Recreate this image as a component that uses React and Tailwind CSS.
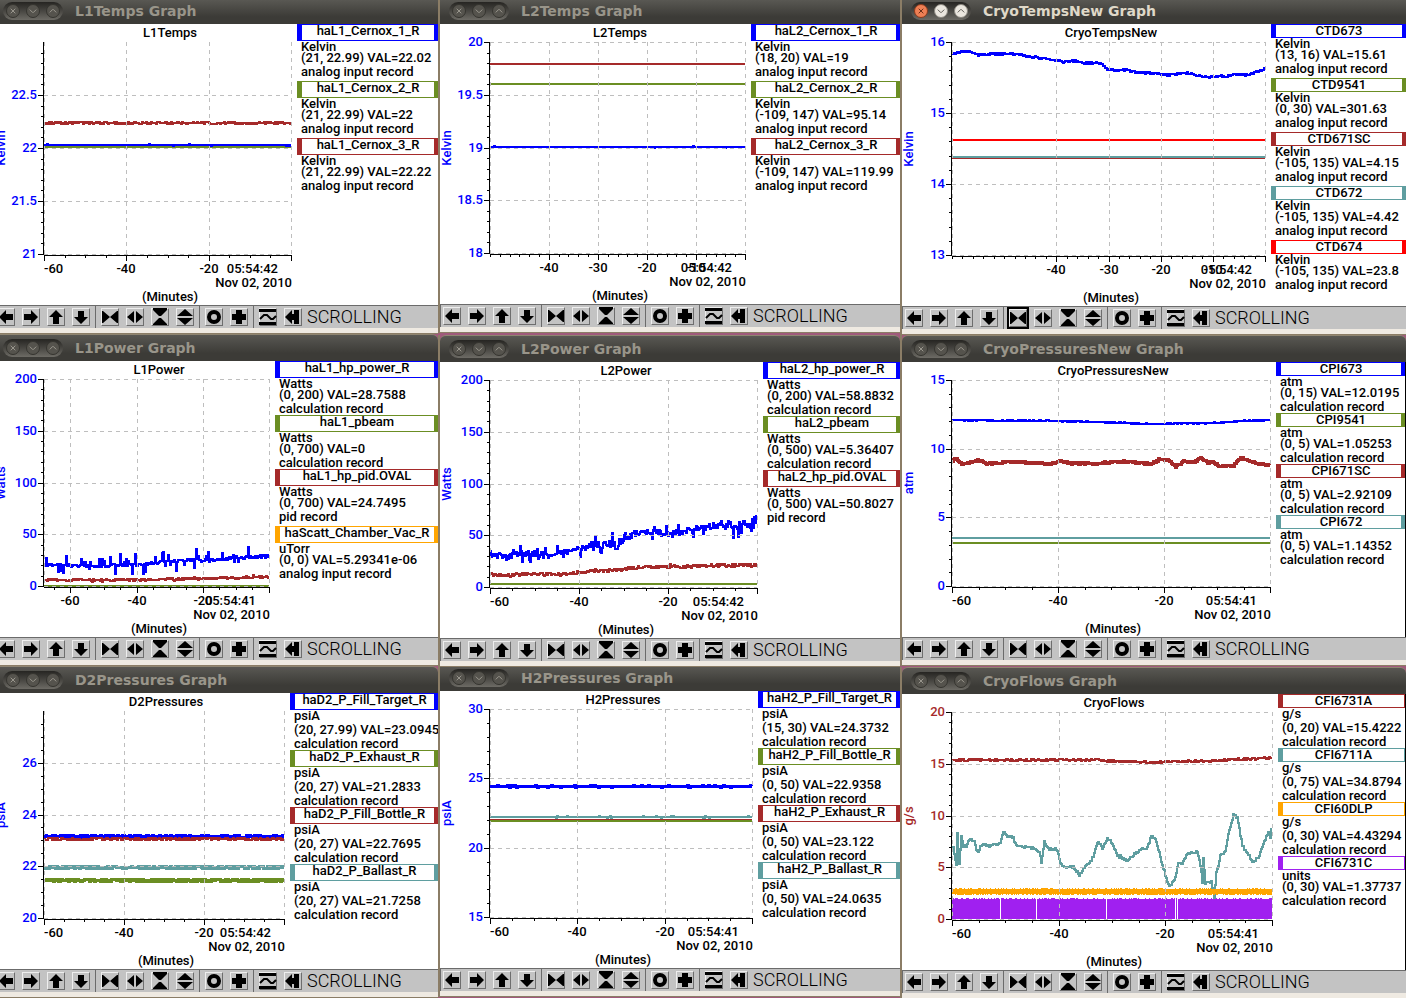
import clsx from "clsx";

const BLUE = "#0000ff";
const GREEN = "#6b8e23";
const BROWN = "#a52a2a";
const TEAL = "#5f9ea0";
const ORANGE = "#ffa500";
const PURPLE = "#a020f0";
const RED = "#ff0000";

const PLOT_LEFT = 50;
const PLOT_TOP = 18;
const PLOT_RIGHT_GAP = 6;
const PLOT_BOTTOM_GAP = 51;

const columns = [
  {
    className: "-ml-2",
    windows: [
      {
        name: "L1Temps",
        flush: true,
        size: [303, 281],
        legendWidth: "w-[141px]",
        y: { label: "Kelvin", min: 21, max: 23, ticks: [21, 21.5, 22, 22.5], minor: 0.1 },
        x: { span: 60, ticks: [-60, -40, -20], minor: 5, time: "05:54:42" },
        series: [
          { color: BROWN, level: 99, noise: 2 },
          { color: GREEN, level: 123, noise: 0 },
          { color: BLUE, level: 121, noise: 0, spike: 2, rate: 0.06 },
        ],
        legend: [
          [BLUE, "haL1_Cernox_1_R", "Kelvin", "(21, 22.99) VAL=22.02", "analog input record"],
          [GREEN, "haL1_Cernox_2_R", "Kelvin", "(21, 22.99) VAL=22", "analog input record"],
          [BROWN, "haL1_Cernox_3_R", "Kelvin", "(21, 22.99) VAL=22.22", "analog input record"],
        ],
      },
      {
        name: "L1Power",
        size: [281, 276],
        legendWidth: "w-[163px]",
        y: { label: "Watts", min: 0, max: 200, ticks: [0, 50, 100, 150, 200], minor: 10 },
        x: { span: 68, ticks: [-60, -40, -20], minor: 5, time: "05:54:41" },
        series: [
          { color: GREEN, level: 225, noise: 0 },
          {
            color: BROWN,
            points: [[50, 219], [143, 219], [189, 218], [274, 216]],
            noise: 2,
            spike: 3,
            rate: 0.1,
          },
          {
            color: BLUE,
            points: [[50, 204], [106, 205], [143, 204], [163, 202], [189, 199], [223, 199], [239, 197], [274, 195]],
            noise: 3,
            spike: 24,
            rate: 0.24,
          },
        ],
        legend: [
          [BLUE, "haL1_hp_power_R", "Watts", "(0, 200) VAL=28.7588", "calculation record"],
          [GREEN, "haL1_pbeam", "Watts", "(0, 700) VAL=0", "calculation record"],
          [BROWN, "haL1_hp_pid.OVAL", "Watts", "(0, 700) VAL=24.7495", "pid record"],
          [ORANGE, "haScatt_Chamber_Vac_R", "uTorr", "(0, 0) VAL=5.29341e-06", "analog input record"],
        ],
      },
      {
        name: "D2Pressures",
        size: [296, 276],
        legendWidth: "w-[148px]",
        y: { label: "psiA", min: 20, max: 28, ticks: [20, 22, 24, 26], minor: 0.5 },
        x: { span: 60, ticks: [-60, -40, -20], minor: 5, time: "05:54:42" },
        series: [
          { color: BLUE, level: 143, noise: 2, width: 3 },
          { color: BROWN, level: 146, noise: 3, width: 2 },
          { color: TEAL, level: 174, noise: 3, width: 3 },
          { color: GREEN, level: 187, noise: 3, width: 3 },
        ],
        legend: [
          [BLUE, "haD2_P_Fill_Target_R", "psiA", "(20, 27.99) VAL=23.0945", "calculation record"],
          [GREEN, "haD2_P_Exhaust_R", "psiA", "(20, 27) VAL=21.2833", "calculation record"],
          [BROWN, "haD2_P_Fill_Bottle_R", "psiA", "(20, 27) VAL=22.7695", "calculation record"],
          [TEAL, "haD2_P_Ballast_R", "psiA", "(20, 27) VAL=21.7258", "calculation record"],
        ],
      },
    ],
  },
  {
    windows: [
      {
        name: "L2Temps",
        flush: true,
        size: [311, 280],
        legendWidth: "w-[149px]",
        y: { label: "Kelvin", min: 18, max: 20, ticks: [18, 18.5, 19, 19.5, 20], minor: 0.1 },
        x: { span: 52, ticks: [-40, -30, -20, -10], minor: 2, time: "05:54:42" },
        series: [
          { color: BROWN, level: 40, noise: 0 },
          { color: GREEN, level: 60, noise: 0 },
          { color: BLUE, level: 123, noise: 0, spike: 2, rate: 0.06 },
        ],
        legend: [
          [BLUE, "haL2_Cernox_1_R", "Kelvin", "(18, 20) VAL=19", "analog input record"],
          [GREEN, "haL2_Cernox_2_R", "Kelvin", "(-109, 147) VAL=95.14", "analog input record"],
          [BROWN, "haL2_Cernox_3_R", "Kelvin", "(-109, 147) VAL=119.99", "analog input record"],
        ],
      },
      {
        name: "L2Power",
        className: "mt-[2px]",
        size: [323, 276],
        legendWidth: "w-[137px]",
        y: { label: "Watts", min: 0, max: 200, ticks: [0, 50, 100, 150, 200], minor: 10 },
        x: { span: 60, ticks: [-60, -40, -20], minor: 5, time: "05:54:42" },
        series: [
          { color: GREEN, level: 222, noise: 0 },
          {
            color: BROWN,
            points: [[50, 212], [65, 214], [85, 212], [125, 212], [151, 209], [178, 208], [200, 205], [231, 205], [260, 204], [316, 203]],
            noise: 3,
            spike: 4,
            rate: 0.1,
          },
          {
            color: BLUE,
            points: [
              [50, 192], [65, 195], [85, 191], [108, 193], [131, 189], [151, 183], [178, 181], [195, 171],
              [215, 170], [231, 172], [248, 167], [275, 164], [291, 166], [308, 163], [316, 165],
            ],
            noise: 6,
            spike: 20,
            rate: 0.28,
          },
        ],
        legend: [
          [BLUE, "haL2_hp_power_R", "Watts", "(0, 200) VAL=58.8832", "calculation record"],
          [GREEN, "haL2_pbeam", "Watts", "(0, 500) VAL=5.36407", "calculation record"],
          [BROWN, "haL2_hp_pid.OVAL", "Watts", "(0, 500) VAL=50.8027", "pid record"],
        ],
      },
      {
        name: "H2Pressures",
        flush: true,
        size: [318, 277],
        legendWidth: "w-[142px]",
        y: { label: "psiA", min: 15, max: 30, ticks: [15, 20, 25, 30], minor: 1 },
        x: { span: 60, ticks: [-60, -40, -20], minor: 5, time: "05:54:41" },
        series: [
          { color: BLUE, level: 95, noise: 1, spike: 2, rate: 0.2, width: 3 },
          { color: TEAL, level: 126, noise: 1, spike: 2, rate: 0.1 },
          { color: GREEN, level: 130, noise: 0 },
          { color: BROWN, level: 128, noise: 0, width: 1 },
        ],
        legend: [
          [BLUE, "haH2_P_Fill_Target_R", "psiA", "(15, 30) VAL=24.3732", "calculation record"],
          [GREEN, "haH2_P_Fill_Bottle_R", "psiA", "(0, 50) VAL=22.9358", "calculation record"],
          [BROWN, "haH2_P_Exhaust_R", "psiA", "(0, 50) VAL=23.122", "calculation record"],
          [TEAL, "haH2_P_Ballast_R", "psiA", "(0, 50) VAL=24.0635", "calculation record"],
        ],
      },
    ],
  },
  {
    windows: [
      {
        name: "CryoTempsNew",
        flush: true,
        active: true,
        size: [369, 282],
        legendWidth: "w-[135px]",
        y: { label: "Kelvin", min: 13, max: 16, ticks: [13, 14, 15, 16], minor: 0.2 },
        x: { span: 60, ticks: [-40, -30, -20, -10], minor: 2, time: "05:54:42" },
        series: [
          { color: RED, level: 116, noise: 0 },
          { color: BROWN, level: 134, noise: 0 },
          { color: TEAL, level: 133, noise: 0 },
          {
            color: BLUE,
            points: [
              [50, 30], [65, 27], [76, 31], [91, 30], [111, 30], [131, 33], [153, 36], [161, 38], [173, 37],
              [181, 39], [198, 39], [205, 45], [215, 47], [225, 46], [238, 49], [251, 49], [265, 51], [285, 49],
              [293, 51], [305, 53], [318, 52], [323, 53], [331, 50], [346, 51], [353, 48], [362, 45],
            ],
            noise: 2,
          },
        ],
        legend: [
          [BLUE, "CTD673", "Kelvin", "(13, 16) VAL=15.61", "analog input record"],
          [GREEN, "CTD9541", "Kelvin", "(0, 30) VAL=301.63", "analog input record"],
          [BROWN, "CTD671SC", "Kelvin", "(-105, 135) VAL=4.15", "analog input record"],
          [TEAL, "CTD672", "Kelvin", "(-105, 135) VAL=4.42", "analog input record"],
          [RED, "CTD674", "Kelvin", "(-105, 135) VAL=23.8", "analog input record"],
        ],
      },
      {
        name: "CryoPressuresNew",
        size: [374, 275],
        legendWidth: "w-[130px] border-r border-black",
        y: { label: "atm", min: 0, max: 15, ticks: [0, 5, 10, 15], minor: 1 },
        x: { span: 60, ticks: [-60, -40, -20], minor: 5, time: "05:54:41" },
        series: [
          {
            color: BLUE,
            points: [[50, 58], [155, 59], [200, 60], [250, 62], [310, 61], [340, 59], [368, 58]],
            noise: 1,
          },
          {
            color: BROWN,
            points: [
              [50, 99], [53, 96], [60, 102], [75, 98], [85, 101], [115, 99], [128, 101], [138, 100], [146, 102],
              [158, 98], [168, 101], [195, 101], [215, 99], [238, 100], [248, 102], [256, 97], [265, 97],
              [273, 104], [281, 99], [293, 99], [298, 95], [306, 101], [310, 99], [316, 104], [331, 103],
              [338, 95], [348, 99], [358, 102], [368, 103],
            ],
            noise: 2,
            width: 3,
          },
          { color: TEAL, level: 176, noise: 0 },
          { color: GREEN, level: 181, noise: 1 },
        ],
        legend: [
          [BLUE, "CPI673", "atm", "(0, 15) VAL=12.0195", "calculation record"],
          [GREEN, "CPI9541", "atm", "(0, 5) VAL=1.05253", "calculation record"],
          [BROWN, "CPI671SC", "atm", "(0, 5) VAL=2.92109", "calculation record"],
          [TEAL, "CPI672", "atm", "(0, 5) VAL=1.14352", "calculation record"],
        ],
      },
      {
        name: "CryoFlows",
        className: "mt-px",
        size: [376, 276],
        legendWidth: "w-[128px] border-r border-black",
        thinEdge: true,
        y: { label: "g/s", color: BROWN, min: 0, max: 20, ticks: [0, 5, 10, 15, 20], minor: 1 },
        x: { span: 60, ticks: [-60, -40, -20], minor: 5, time: "05:54:41" },
        series: [
          {
            color: BROWN,
            points: [[50, 66], [190, 66], [240, 68], [310, 67], [340, 65], [369, 64]],
            noise: 2,
          },
          {
            color: TEAL,
            points: [
              [51, 154], [54, 171], [55, 138], [57, 170], [59, 141], [61, 153], [65, 151], [68, 144], [72, 148],
              [75, 158], [80, 151], [88, 152], [98, 149], [100, 141], [102, 138], [105, 142], [111, 144],
              [115, 153], [131, 154], [137, 158], [139, 168], [141, 154], [142, 148], [145, 154], [155, 156],
              [158, 168], [161, 173], [171, 173], [177, 181], [181, 174], [188, 168], [192, 159], [195, 148],
              [200, 154], [205, 145], [210, 149], [215, 161], [225, 167], [231, 161], [238, 156], [245, 153],
              [249, 142], [253, 146], [258, 163], [263, 181], [267, 193], [273, 184], [276, 168], [280, 171],
              [285, 159], [295, 158], [298, 171], [300, 188], [301, 164], [303, 189], [309, 188], [312, 204],
              [314, 178], [316, 171], [318, 161], [323, 158], [326, 141], [331, 121], [335, 124], [340, 151],
              [350, 167], [356, 164], [361, 149], [366, 138], [368, 144], [370, 126],
            ],
            noise: 3,
            width: 2,
          },
          { color: ORANGE, band: [194, 200] },
          { color: PURPLE, band: [204, 225], gaps: [98, 134, 204, 273, 275] },
        ],
        legend: [
          [BROWN, "CFI6731A", "g/s", "(0, 20) VAL=15.4222", "calculation record"],
          [TEAL, "CFI6711A", "g/s", "(0, 75) VAL=34.8794", "calculation record"],
          [ORANGE, "CFI60DLP", "g/s", "(0, 30) VAL=4.43294", "calculation record"],
          [PURPLE, "CFI6731C", "units", "(0, 30) VAL=1.37737", "calculation record"],
        ],
      },
    ],
  },
];

// small seeded generator so that the traces look the same on each render
function createRandom(seed) {
  let state = seed;
  return () => {
    state = (state * 1664525 + 1013904223) % 4294967296;
    return state / 4294967296;
  };
}

function valueAt(points, x) {
  const next = points.findIndex((point) => point[0] >= x);
  if (next === -1) return points[points.length - 1][1];
  if (next === 0) return points[0][1];
  const [x0, y0] = points[next - 1];
  const [x1, y1] = points[next];
  return y0 + ((y1 - y0) * (x - x0)) / (x1 - x0);
}

function tracePath(series, right, seed) {
  const random = createRandom(seed);
  const points = series.points || [[PLOT_LEFT, series.level]];
  let path = "";
  for (let x = PLOT_LEFT; x < right; x++) {
    let y = valueAt(points, x) + (random() - 0.5) * series.noise;
    if (series.spike && random() < series.rate) {
      y += (random() - 0.55) * series.spike;
    }
    path += x === PLOT_LEFT ? `M${x} ${Math.round(y)}` : `H${x}V${Math.round(y)}`;
  }
  return `${path}H${right}`;
}

function bandPath(series, right, seed) {
  const random = createRandom(seed);
  const [top, bottom] = series.band;
  let path = "";
  for (let x = PLOT_LEFT; x < right; x++) {
    if (series.gaps && series.gaps.includes(x)) continue;
    const y = top + Math.round(random() * 1.4);
    path += `M${x + 0.5} ${y}V${bottom + (series.gaps ? 0 : Math.round(random() * 1.4))}`;
  }
  return path;
}

function range(from, to, step) {
  const count = Math.floor((to - from) / step + 0.001);
  return Array.from({ length: count + 1 }, (_, i) => from + i * step);
}

function Chart({ name, size, x, y, series }) {
  const [width, height] = size;
  const right = width - PLOT_RIGHT_GAP;
  const bottom = height - PLOT_BOTTOM_GAP;
  const middle = Math.round((PLOT_LEFT + right) / 2) + 2;
  const labelColor = y.color || BLUE;

  const toX = (minutes) => Math.round(right + ((right - PLOT_LEFT) * minutes) / x.span);
  const toY = (value) =>
    Math.round(bottom - ((bottom - PLOT_TOP) * (value - y.min)) / (y.max - y.min));

  return (
    <svg
      viewBox={`0 0 ${width} ${height}`}
      role="img"
      aria-label={`${name} strip chart`}
      className="block h-auto w-full font-[Roboto,sans-serif] text-[13px] font-medium"
    >
      <g fill="none" shapeRendering="crispEdges">
        {series.map((item, i) => (
          <path
            key={i}
            d={item.band ? bandPath(item, right, i + 7) : tracePath(item, right, i * 31 + width)}
            stroke={item.color}
            strokeWidth={item.band ? 1 : item.width || 2}
          />
        ))}
        <g stroke="#bebebe" strokeDasharray="4 4">
          {y.ticks.map((tick) => (
            <path key={tick} d={`M${PLOT_LEFT} ${toY(tick) + 0.5}H${right}`} />
          ))}
          {[...x.ticks, 0].map((tick) => (
            <path key={tick} d={`M${toX(tick) + 0.5} ${PLOT_TOP}V${bottom}`} />
          ))}
          <path d={`M${PLOT_LEFT + 0.5} ${PLOT_TOP}V${bottom}`} />
        </g>
        <g stroke="#000">
          <path d={`M49.5 ${PLOT_TOP}V${bottom + 1}M50 ${bottom + 1.5}H${right + 1}`} />
          {y.ticks.map((tick) => (
            <path key={tick} d={`M44 ${toY(tick) + 0.5}H49`} />
          ))}
          {range(y.min, y.max - y.minor, y.minor).map((tick) => (
            <path key={tick} d={`M47 ${toY(tick) + 0.5}H49`} />
          ))}
          {[...x.ticks, 0].map((tick) => (
            <path key={tick} d={`M${toX(tick) + 0.5} ${bottom + 2}V${bottom + 7}`} />
          ))}
          {range(0, x.span, x.minor).map((tick) => (
            <path key={tick} d={`M${toX(-tick) + 0.5} ${bottom + 2}V${bottom + 4}`} />
          ))}
        </g>
      </g>

      <text x={middle} y="13" textAnchor="middle">
        {name}
      </text>
      <g fill={labelColor}>
        {y.ticks.map((tick) => (
          <text key={tick} x="43" y={toY(tick) + 4} textAnchor="end">
            {tick}
          </text>
        ))}
        <text
          transform={`translate(11 ${Math.round((PLOT_TOP + bottom) / 2)}) rotate(-90)`}
          textAnchor="middle"
        >
          {y.label}
        </text>
      </g>
      {x.ticks.map((tick) => (
        <text
          key={tick}
          x={toX(tick)}
          y={bottom + 19}
          textAnchor={toX(tick) === PLOT_LEFT ? "start" : "middle"}
        >
          {tick}
        </text>
      ))}
      <text x={right - 13} y={bottom + 19} textAnchor="end">
        {x.time}
      </text>
      <text x={right + 1} y={bottom + 33} textAnchor="end">
        Nov 02, 2010
      </text>
      <text x={middle} y={bottom + 47} textAnchor="middle">
        (Minutes)
      </text>
    </svg>
  );
}

const hasDescender = (text) => /[gjpqy_()]/.test(text);

function Legend({ items, widthClass, thinEdge }) {
  return (
    <ul
      className={clsx(
        "shrink-0 overflow-hidden font-[Roboto,sans-serif] text-[13px] leading-[11px] font-medium whitespace-nowrap",
        widthClass
      )}
    >
      {items.map(([color, title, unit, values, record]) => (
        <li key={title}>
          <h3
            className={clsx(
              "flex justify-center border-y border-l-5",
              thinEdge ? "border-r" : "border-r-4",
              hasDescender(title) ? "pb-1" : "pb-px"
            )}
            style={{ borderColor: color }}
          >
            {title}
          </h3>
          <div className="pl-1">
            <p className={hasDescender(unit) ? "pb-[3px]" : ""}>{unit}</p>
            <p className="pb-[3px]">{values}</p>
            <p className={hasDescender(record) ? "pb-1" : "pb-px"}>{record}</p>
          </div>
        </li>
      ))}
    </ul>
  );
}

const toolGroups = [
  [
    { label: "Scroll left", path: "M2 9L9 2V6H16V12H9V16Z" },
    { label: "Scroll right", path: "M16 9L9 2V6H2V12H9V16Z" },
    { label: "Scroll up", path: "M9 2L16 9H12V16H6V9H2Z" },
    { label: "Scroll down", path: "M9 16L16 9H12V3H6V9H2Z" },
  ],
  [
    { label: "Shrink horizontally", path: "M1 3H2L9 9L2 15H1ZM17 3H16L9 9L16 15H17Z", pressed: true },
    { label: "Stretch horizontally", path: "M1 9L8 3V15ZM17 9L10 3V15Z" },
    { label: "Shrink vertically", path: "M2 0H16V2L10 8H8L2 2ZM2 17H16V16L10 10H8L2 16Z" },
    { label: "Stretch vertically", path: "M9 1L17 8H1ZM9 17L17 10H1Z" },
  ],
  [
    { label: "Autoscale", path: "M9 2A7 7 0 1 1 9 16A7 7 0 1 1 9 2ZM9 6A3 3 0 1 0 9 12A3 3 0 1 0 9 6Z" },
    { label: "Zoom", path: "M6 2H12V6H16V12H12V16H6V12H2V6H6Z" },
  ],
  [
    { label: "Toggle view", wave: true },
    { label: "Scroll to now", path: "M1 9L8 2V6H10V2H15V16H10V12H8V16Z" },
  ],
];

function ToolButton({ tool, focused }) {
  return (
    <button
      type="button"
      aria-label={tool.label}
      className={clsx(
        "size-[18px] border border-t-[#eeeeee] border-r-[#6e6e6e] border-b-[#6e6e6e] border-l-[#eeeeee] bg-[#c3c3c3]",
        focused && tool.pressed && "outline-2 outline-black"
      )}
    >
      <svg viewBox="1 1 16 16" className="block size-4 overflow-visible">
        {tool.wave ? (
          <>
            <path d="M0 1H17V4H0ZM0 14H17V17H0Z" />
            <path d="M1 11L5 7H8L12 11H14L17 8" fill="none" stroke="#000" strokeWidth="2" />
          </>
        ) : (
          <path d={tool.path} fillRule="evenodd" />
        )}
      </svg>
    </button>
  );
}

function Toolbar({ focused }) {
  return (
    <div className="flex h-[23px] items-center overflow-hidden border-t border-l border-[#6b6b6b] bg-[#c3c3c3] pl-[2px]">
      {toolGroups.map((group, i) => (
        <div
          key={i}
          className={clsx(
            "flex h-full items-center gap-[7px] pr-[5px]",
            i > 0 && "border-l border-[#6b6b6b] pl-[5px]"
          )}
        >
          {group.map((tool) => (
            <ToolButton key={tool.label} tool={tool} focused={focused} />
          ))}
        </div>
      ))}
      <span className="font-[Roboto,sans-serif] text-lg leading-5 font-light text-black">
        SCROLLING
      </span>
    </div>
  );
}

const windowControls = [
  { label: "Close", path: "M4 4L9 9M9 4L4 9" },
  { label: "Minimize", path: "M3 5L6 8H7L10 5" },
  { label: "Maximize", path: "M3 8L6 5H7L10 8" },
];

function TitleBar({ name, active, flush }) {
  return (
    <header
      className={clsx(
        "flex items-end overflow-hidden bg-linear-to-b from-[#595853] to-[#3c3b37] to-70% pl-[9px]",
        flush ? "h-6" : "h-[27px] rounded-t-md border-t border-[#8f8571]"
      )}
    >
      <div className="mb-1 flex h-[18px] items-center gap-[6px] rounded-full bg-linear-to-b from-[#262522] to-[#6d6b65] px-[3px]">
        {windowControls.map((control) => (
          <button
            key={control.label}
            type="button"
            aria-label={control.label}
            className={clsx(
              "size-[14px] rounded-full border",
              !active && "border-[#35342f] bg-[#55534d] text-[#a09c92]",
              active && control.label === "Close" && "border-[#8c3a1c] bg-[#ee7f54] text-[#5d2713]",
              active && control.label !== "Close" && "border-[#8b8880] bg-[#eae6de] text-[#55534d]"
            )}
          >
            <svg viewBox="0 0 13 13" className="block size-3">
              <path d={control.path} fill="none" stroke="currentColor" />
            </svg>
          </button>
        ))}
      </div>
      <h2
        className={clsx(
          "pl-3 font-['DejaVu_Sans',sans-serif] text-sm leading-[26px] font-bold whitespace-nowrap",
          active ? "text-[#dfd8c8]" : "text-[#99958a]"
        )}
      >
        {name} Graph
      </h2>
    </header>
  );
}

function GraphWindow({ graph }) {
  return (
    <section className={clsx("border-l-2 border-[#8b7d66]", graph.className)}>
      <TitleBar name={graph.name} active={graph.active} flush={graph.flush} />
      <div className="flex bg-white">
        <div className="min-w-0 flex-1">
          <Chart name={graph.name} size={graph.size} x={graph.x} y={graph.y} series={graph.series} />
        </div>
        <Legend items={graph.legend} widthClass={graph.legendWidth} thinEdge={graph.thinEdge} />
      </div>
      <Toolbar focused={graph.active} />
      <div className="h-[6px] border-b border-[#8b7d66] bg-[#efeae2]" />
    </section>
  );
}

export default function App() {
  return (
    <main className="grid max-h-screen min-h-screen grid-cols-[438fr_462fr_506fr] overflow-hidden bg-[#a05a7c] text-black">
      {columns.map((column, i) => (
        <div key={i} className={clsx("min-w-0", column.className)}>
          {column.windows.map((graph) => (
            <GraphWindow key={graph.name} graph={graph} />
          ))}
        </div>
      ))}
    </main>
  );
}
